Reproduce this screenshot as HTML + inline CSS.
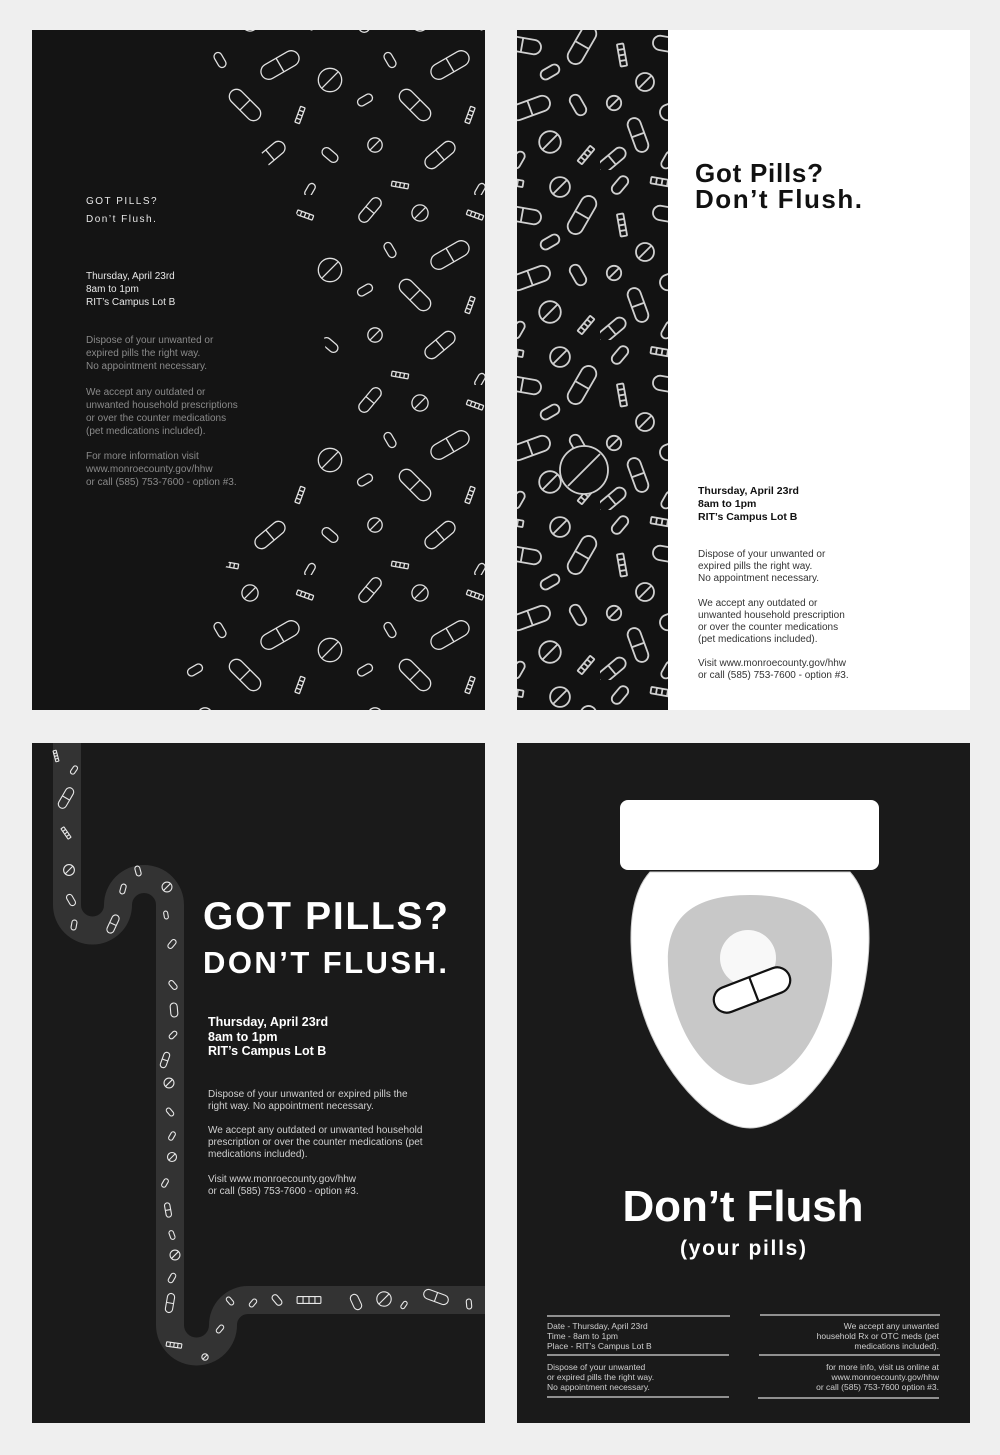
<!DOCTYPE html>
<html><head><meta charset="utf-8"><style>
html,body{margin:0;padding:0;background:#efefef;width:1000px;height:1455px;overflow:hidden}
svg{display:block}
text{font-family:"Liberation Sans",sans-serif}
use *{vector-effect:non-scaling-stroke}
rect,circle,line{vector-effect:non-scaling-stroke}
</style></head><body>
<svg width="1000" height="1455" viewBox="0 0 1000 1455" xmlns="http://www.w3.org/2000/svg">
<defs>
<g id="cap" fill="none"><rect x="-16" y="-6" width="32" height="12" rx="6" vector-effect="non-scaling-stroke"/><line x1="0" y1="-6" x2="0" y2="6" vector-effect="non-scaling-stroke"/></g>
<g id="oval" fill="none"><rect x="-10" y="-5" width="20" height="10" rx="5" vector-effect="non-scaling-stroke"/></g>
<g id="tab" fill="none"><circle r="9" vector-effect="non-scaling-stroke"/><line x1="-6" y1="6" x2="6" y2="-6" vector-effect="non-scaling-stroke"/></g>
<g id="bar" fill="none"><rect x="-14" y="-4" width="28" height="8" rx="1" vector-effect="non-scaling-stroke"/><line x1="-7" y1="-4" x2="-7" y2="4" vector-effect="non-scaling-stroke"/><line x1="0" y1="-4" x2="0" y2="4" vector-effect="non-scaling-stroke"/><line x1="7" y1="-4" x2="7" y2="4" vector-effect="non-scaling-stroke"/></g>
<pattern id="pp" width="150" height="170" patternUnits="userSpaceOnUse">
<g stroke="#d0d0d0" stroke-width="1.8">
<use href="#oval" transform="translate(20,15) rotate(-50) scale(1)"/>
<use href="#bar" transform="translate(62,12) rotate(10) scale(.8)"/>
<use href="#tab" transform="translate(110,17) scale(1.1)"/>
<use href="#cap" transform="translate(132,45) rotate(-60) scale(1.3)"/>
<use href="#bar" transform="translate(22,55) rotate(80) scale(.8)"/>
<use href="#cap" transform="translate(72,45) rotate(10) scale(1.2)"/>
<use href="#tab" transform="translate(45,82) scale(1)"/>
<use href="#oval" transform="translate(100,72) rotate(-30) scale(1)"/>
<use href="#tab" transform="translate(14,103) scale(.8)"/>
<use href="#cap" transform="translate(80,108) rotate(-20) scale(1.3)"/>
<use href="#oval" transform="translate(128,105) rotate(60) scale(1.1)"/>
<use href="#cap" transform="translate(38,135) rotate(70) scale(1.1)"/>
<use href="#tab" transform="translate(100,142) scale(1.2)"/>
<use href="#bar" transform="translate(136,155) rotate(-50) scale(.7)"/>
<use href="#oval" transform="translate(68,160) rotate(-60) scale(.9)"/>
<use href="#cap" transform="translate(12,160) rotate(-40) scale(1)"/>
</g></pattern>
<pattern id="pp2" width="170" height="190" patternUnits="userSpaceOnUse" patternTransform="translate(10,5)">
<g stroke="#e0e0e0" stroke-width="1.3">
<use href="#cap" transform="translate(20,15) rotate(-50) scale(.9)"/>
<use href="#tab" transform="translate(70,18) scale(.9)"/>
<use href="#bar" transform="translate(125,20) rotate(20) scale(.6)"/>
<use href="#oval" transform="translate(40,55) rotate(60) scale(.8)"/>
<use href="#cap" transform="translate(100,60) rotate(-30) scale(1.3)"/>
<use href="#tab" transform="translate(150,75) scale(1.3)"/>
<use href="#oval" transform="translate(15,95) rotate(-30) scale(.8)"/>
<use href="#cap" transform="translate(65,100) rotate(45) scale(1.2)"/>
<use href="#bar" transform="translate(120,110) rotate(-70) scale(.6)"/>
<use href="#tab" transform="translate(25,140) scale(.8)"/>
<use href="#cap" transform="translate(90,150) rotate(-40) scale(1.1)"/>
<use href="#oval" transform="translate(150,150) rotate(40) scale(.9)"/>
<use href="#bar" transform="translate(50,180) rotate(10) scale(.6)"/>
<use href="#oval" transform="translate(130,185) rotate(-60) scale(.7)"/>
</g></pattern>
<clipPath id="tlclip"><polygon points="200,30 485,30 485,710 150,710 175,650 230,560 300,470 330,390 320,300 300,220 260,150 220,90"/></clipPath>
</defs>

<!-- Panel 1 top-left -->
<rect x="32" y="30" width="453" height="680" fill="#141414"/>
<rect x="32" y="30" width="453" height="680" fill="url(#pp2)" clip-path="url(#tlclip)"/>
<g fill="#e8e8e8" font-size="10">
<text x="86" y="204" letter-spacing="1.5">GOT PILLS?</text>
<text x="86" y="222" letter-spacing="1.5">Don’t Flush.</text>
<text x="86" y="279">Thursday, April 23rd</text>
<text x="86" y="292">8am to 1pm</text>
<text x="86" y="305">RIT’s Campus Lot B</text>
</g>
<g fill="#8a8a8a" font-size="10">
<text x="86" y="343">Dispose of your unwanted or</text>
<text x="86" y="356">expired pills the right way.</text>
<text x="86" y="369">No appointment necessary.</text>
<text x="86" y="395">We accept any outdated or</text>
<text x="86" y="408">unwanted household prescriptions</text>
<text x="86" y="421">or over the counter medications</text>
<text x="86" y="434">(pet medications included).</text>
<text x="86" y="459">For more information visit</text>
<text x="86" y="472">www.monroecounty.gov/hhw</text>
<text x="86" y="485">or call (585) 753-7600  - option #3.</text>
</g>

<!-- Panel 2 top-right -->
<rect x="517" y="30" width="453" height="680" fill="#ffffff"/>
<rect x="517" y="30" width="151" height="680" fill="#121212"/>
<rect x="517" y="30" width="151" height="680" fill="url(#pp)"/>
<g stroke="#d0d0d0" stroke-width="1.8" fill="none">
<circle cx="584" cy="470" r="24" fill="#121212"/><line x1="568" y1="486" x2="600" y2="454"/>
</g>
<g fill="#111" font-weight="bold">
<text x="695" y="182" font-size="26" textLength="128">Got Pills?</text>
<text x="695" y="208" font-size="26" textLength="167">Don’t Flush.</text>
<text x="698" y="494" font-size="10.5">Thursday, April 23rd</text>
<text x="698" y="507" font-size="10.5">8am to 1pm</text>
<text x="698" y="520" font-size="10.5">RIT’s Campus Lot B</text>
</g>
<g fill="#333" font-size="10">
<text x="698" y="557">Dispose of your unwanted or</text>
<text x="698" y="569">expired pills the right way.</text>
<text x="698" y="581">No appointment necessary.</text>
<text x="698" y="606">We accept any outdated or</text>
<text x="698" y="618">unwanted household prescription</text>
<text x="698" y="630">or over the counter medications</text>
<text x="698" y="642">(pet medications included).</text>
<text x="698" y="666">Visit www.monroecounty.gov/hhw</text>
<text x="698" y="678">or call (585) 753-7600  - option #3.</text>
</g>

<!-- Panel 3 bottom-left -->
<rect x="32" y="743" width="453" height="680" fill="#1a1a1a"/>
<path d="M67,743 V905 A25.5,25.5 0 0 0 118,905 A26,26 0 0 1 170,905 V1325 A26.5,26.5 0 0 0 223,1325 A25,25 0 0 1 248,1300 H485" fill="none" stroke="#333333" stroke-width="28"/>
<g stroke="#e8e8e8" stroke-width="1.1">
<use href="#bar" transform="translate(56,756) rotate(75) scale(.4)"/>
<use href="#oval" transform="translate(74,770) rotate(-55) scale(.45)"/>
<use href="#cap" transform="translate(66,798) rotate(-60) scale(.7)"/>
<use href="#bar" transform="translate(66,833) rotate(55) scale(.45)"/>
<use href="#tab" transform="translate(69,870) scale(.6)"/>
<use href="#oval" transform="translate(71,900) rotate(60) scale(.6)"/>
<use href="#oval" transform="translate(74,925) rotate(-80) scale(.5)"/>
<use href="#cap" transform="translate(113,924) rotate(-65) scale(.6)"/>
<use href="#oval" transform="translate(123,889) rotate(-75) scale(.5)"/>
<use href="#oval" transform="translate(138,871) rotate(75) scale(.5)"/>
<use href="#tab" transform="translate(167,887) scale(.55)"/>
<use href="#oval" transform="translate(166,915) rotate(80) scale(.4)"/>
<use href="#oval" transform="translate(172,944) rotate(-50) scale(.5)"/>
<use href="#oval" transform="translate(173,985) rotate(50) scale(.5)"/>
<use href="#oval" transform="translate(174,1010) rotate(85) scale(.7)"/>
<use href="#oval" transform="translate(173,1035) rotate(-45) scale(.45)"/>
<use href="#cap" transform="translate(165,1060) rotate(-70) scale(.5)"/>
<use href="#tab" transform="translate(169,1083) scale(.55)"/>
<use href="#oval" transform="translate(170,1112) rotate(50) scale(.45)"/>
<use href="#oval" transform="translate(172,1136) rotate(-60) scale(.45)"/>
<use href="#tab" transform="translate(172,1157) scale(.5)"/>
<use href="#oval" transform="translate(165,1183) rotate(-60) scale(.45)"/>
<use href="#cap" transform="translate(168,1210) rotate(80) scale(.45)"/>
<use href="#oval" transform="translate(172,1235) rotate(70) scale(.45)"/>
<use href="#tab" transform="translate(175,1255) scale(.55)"/>
<use href="#oval" transform="translate(172,1278) rotate(-60) scale(.5)"/>
<use href="#cap" transform="translate(170,1303) rotate(-80) scale(.6)"/>
<use href="#bar" transform="translate(174,1345) rotate(8) scale(.55)"/>
<use href="#tab" transform="translate(205,1357) scale(.35)"/>
<use href="#oval" transform="translate(220,1329) rotate(-50) scale(.45)"/>
<use href="#oval" transform="translate(230,1301) rotate(50) scale(.45)"/>
<use href="#oval" transform="translate(253,1303) rotate(-50) scale(.45)"/>
<use href="#oval" transform="translate(277,1300) rotate(50) scale(.6)"/>
<use href="#bar" transform="translate(309,1300) scale(.85)"/>
<use href="#oval" transform="translate(356,1302) rotate(65) scale(.8)"/>
<use href="#tab" transform="translate(384,1299) scale(.8)"/>
<use href="#oval" transform="translate(404,1305) rotate(-55) scale(.4)"/>
<use href="#cap" transform="translate(436,1297) rotate(20) scale(.8)"/>
<use href="#oval" transform="translate(469,1304) rotate(85) scale(.5)"/>
</g>
<g fill="#ffffff" font-weight="bold">
<text x="203" y="929" font-size="39" textLength="245">GOT PILLS?</text>
<text x="203" y="973" font-size="31" textLength="244">DON’T FLUSH.</text>
<text x="208" y="1026" font-size="12.5">Thursday, April 23rd</text>
<text x="208" y="1041" font-size="12.5">8am to 1pm</text>
<text x="208" y="1055" font-size="12.5">RIT’s Campus Lot B</text>
</g>
<g fill="#d0d0d0" font-size="10">
<text x="208" y="1097">Dispose of your unwanted or expired pills the</text>
<text x="208" y="1109">right way. No appointment necessary.</text>
<text x="208" y="1133">We accept any outdated or unwanted household</text>
<text x="208" y="1145">prescription or over the counter medications (pet</text>
<text x="208" y="1157">medications included).</text>
<text x="208" y="1182">Visit www.monroecounty.gov/hhw</text>
<text x="208" y="1194">or call (585) 753-7600  - option #3.</text>
</g>

<!-- Panel 4 bottom-right -->
<rect x="517" y="743" width="453" height="680" fill="#1a1a1a"/>
<rect x="620" y="800" width="259" height="70" rx="8" fill="#ffffff"/>
<path d="M650,872 H850 C880,905 868,980 858,1010 C840,1070 790,1128 750,1128 C710,1128 660,1070 642,1010 C632,980 620,905 650,872 Z" fill="#ffffff" stroke="#cfcfcf" stroke-width="1"/>
<path d="M750,895 C810,895 834,920 832,965 C830,1020 800,1080 750,1085 C700,1080 670,1020 668,965 C666,920 690,895 750,895 Z" fill="#c8c8c8"/>
<circle cx="748" cy="958" r="28" fill="#f8f8f8"/>
<g transform="translate(752,990) rotate(-21)">
<rect x="-40" y="-13" width="80" height="26" rx="13" fill="#fff" stroke="#111" stroke-width="2.2"/>
<line x1="2" y1="-13" x2="2" y2="13" stroke="#111" stroke-width="2.2"/>
</g>
<g fill="#ffffff" font-weight="bold" text-anchor="middle">
<text x="743" y="1221" font-size="44" textLength="241">Don’t Flush</text>
<text x="743" y="1255" font-size="21" textLength="126">(your pills)</text>
</g>
<g stroke="#d8d8d8" stroke-width="1.2">
<line x1="547" y1="1316" x2="730" y2="1316"/><line x1="547" y1="1355" x2="729" y2="1355"/><line x1="547" y1="1397" x2="729" y2="1397"/>
<line x1="760" y1="1315" x2="940" y2="1315"/><line x1="759" y1="1355" x2="940" y2="1355"/><line x1="758" y1="1398" x2="939" y2="1398"/>
</g>
<g fill="#d0d0d0" font-size="8.5">
<text x="547" y="1329">Date - Thursday, April 23rd</text>
<text x="547" y="1339">Time - 8am to 1pm</text>
<text x="547" y="1349">Place - RIT’s Campus Lot B</text>
<text x="547" y="1370">Dispose of your unwanted</text>
<text x="547" y="1380">or expired pills the right way.</text>
<text x="547" y="1390">No appointment necessary.</text>
</g>
<g fill="#d0d0d0" font-size="8.5" text-anchor="end">
<text x="939" y="1329">We accept any unwanted</text>
<text x="939" y="1339">household Rx or OTC meds (pet</text>
<text x="939" y="1349">medications included).</text>
<text x="939" y="1370">for more info, visit us online at</text>
<text x="939" y="1380">www.monroecounty.gov/hhw</text>
<text x="939" y="1390">or call (585) 753-7600 option #3.</text>
</g>
</svg>
</body></html>
